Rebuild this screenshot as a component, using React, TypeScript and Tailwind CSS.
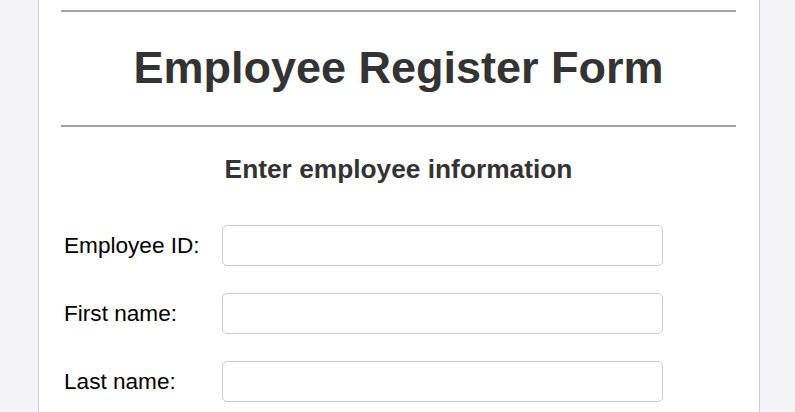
export default function App() {
    const fields = [
        { id: "employeeId", label: "Employee ID:" },
        { id: "firstName", label: "First name:" },
        { id: "lastName", label: "Last name:" },
    ];

    return (
        <main className="min-h-screen bg-[#f3f3f8] font-['Liberation_Sans',Arial,sans-serif]">
            <div className="ml-[38px] min-h-screen w-[722px] border-x border-[#cfcfcf] bg-white pl-[22px] pr-[23px] pt-[10px]">
                <div className="h-[2px] bg-[#a2a2a2]" />
                <h1 className="pt-[30px] pb-[32px] text-center text-[45px] leading-[51px] font-bold text-[#333]">
                    Employee Register Form
                </h1>
                <div className="h-[2px] bg-[#a2a2a2]" />

                <h2 className="mt-[27px] text-center text-[26.3px] leading-[30px] font-bold text-[#333]">
                    Enter employee information
                </h2>

                <form className="mt-[41px] flex flex-col gap-[27px]">
                    {fields.map((f) => (
                        <div key={f.id} className="flex items-center">
                            <label htmlFor={f.id} className="w-[161px] pl-[3px] text-[22.6px] leading-[26px] text-black">
                                {f.label}
                            </label>
                            <input
                                id={f.id}
                                type="text"
                                className="h-[41px] w-[441px] rounded-[5px] border border-[#cccccc] bg-white px-2 text-[18px] outline-none"
                            />
                        </div>
                    ))}
                </form>
            </div>
        </main>
    );
}
